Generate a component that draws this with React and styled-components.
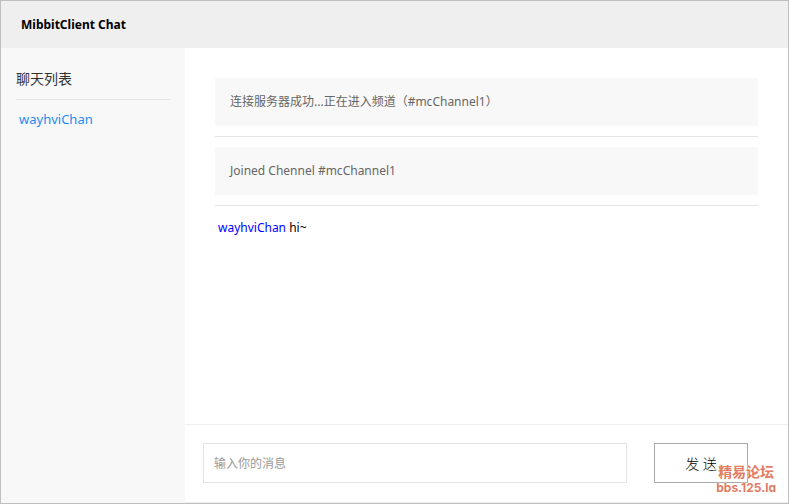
import React, {Component} from 'react';
import styled, {createGlobalStyle, css} from 'styled-components';

const channelUsers = ['wayhviChan'];

const messages = [
    {type: 'system', text: '连接服务器成功...正在进入频道（#mcChannel1）'},
    {type: 'system', text: 'Joined Chennel #mcChannel1'},
    {type: 'user', author: 'wayhviChan', text: 'hi~'}
];

export default class App extends Component {
    state = {
        messages,
        draft: ''
    };

    onDraftChange = ({target}) => this.setState({draft: target.value});

    sendMessage = (event) => {
        event.preventDefault();
        const {messages, draft} = this.state;
        if (!draft.trim()) {
            return;
        }
        this.setState({
            messages: [...messages, {type: 'user', author: 'wayhviChan', text: draft}],
            draft: ''
        });
    }

    renderUsers = () => channelUsers.map((user) => (
        <li key={user}>
            <UserLink href={`#${user}`}>{user}</UserLink>
        </li>
    ));

    renderMessages = () => this.state.messages.map(({type, author, text}, index) => (
        type === 'system'
            ? (
                <SystemMessage key={index}>
                    <SystemText>{text}</SystemText>
                </SystemMessage>
            )
            : <UserMessage key={index}><Author>{author}</Author> {text}</UserMessage>
    ));

    render() {
        return (
            <Window>
                <GlobalStyle/>
                <Header>
                    <Title>MibbitClient Chat</Title>
                </Header>
                <Body>
                    <Sidebar>
                        <SidebarTitle>聊天列表</SidebarTitle>
                        <UserList>{this.renderUsers()}</UserList>
                    </Sidebar>
                    <Chat>
                        <MessageList>{this.renderMessages()}</MessageList>
                        <Composer onSubmit={this.sendMessage}>
                            <MessageInput type="text"
                                          aria-label="输入你的消息"
                                          placeholder="输入你的消息"
                                          value={this.state.draft}
                                          onChange={this.onDraftChange}/>
                            <SendButton type="submit">发 送</SendButton>
                        </Composer>
                    </Chat>
                </Body>
                <Watermark>
                    <WatermarkName>精易论坛</WatermarkName>
                    <WatermarkSite>bbs.125.la</WatermarkSite>
                </Watermark>
            </Window>
        );
    }
}

/**
 * STYLED COMPONENT BLOCK
 */
const GlobalStyle = createGlobalStyle`
    * {
        box-sizing: border-box;
    }

    body {
        margin: 0;
        background: #fff;
        font-family: "Noto Sans", "Noto Sans CJK SC", sans-serif;
        font-size: 12px;
        line-height: 18px;
        color: #000;
    }
`;

const hairline = css`1px solid #e4e4e4`;

const Window = styled.div`
    position: relative;
    display: flex;
    flex-direction: column;
    min-height: 100vh;
    border: 1px solid #bfbfbf;
`;

const Header = styled.header`
    padding: 15px 20px 14px;
    background: #efefef;
`;

const Title = styled.h1`
    margin: 0;
    font-size: 12px;
    line-height: 18px;
    font-weight: 700;
`;

const Body = styled.div`
    display: flex;
    flex: 1;
`;

const Sidebar = styled.aside`
    flex: none;
    width: 184px;
    padding: 15px;
    background: #f8f8f8;
`;

const SidebarTitle = styled.h2`
    margin: 0;
    padding: 4px 0 8px;
    border-bottom: ${hairline};
    font-size: 14px;
    line-height: 24px;
    font-weight: 400;
    color: #333;
`;

const UserList = styled.ul`
    margin: 0;
    padding: 7px 3px;
    list-style: none;
`;

const UserLink = styled.a`
    font-size: 13px;
    line-height: 24px;
    color: #1e8cf0;
    text-decoration: none;
`;

const Chat = styled.main`
    display: flex;
    flex: 1;
    flex-direction: column;
    min-width: 0;
`;

const MessageList = styled.div`
    flex: 1;
    padding: 30px;
`;

const SystemMessage = styled.div`
    margin-bottom: 10px;
    padding-bottom: 10px;
    border-bottom: ${hairline};
`;

const SystemText = styled.p`
    margin: 0;
    padding: 15px;
    background: #f8f8f8;
    color: #666;
`;

const UserMessage = styled.p`
    margin: 0;
    padding: 3px;
`;

const Author = styled.span`
    color: #00f;
`;

const Composer = styled.form`
    display: flex;
    gap: 27px;
    padding: 18px 40px 19px 18px;
    border-top: 1px solid #eee;
    border-bottom: 1px solid #eee;
`;

const MessageInput = styled.input`
    flex: 1;
    min-width: 0;
    height: 40px;
    padding: 0 10px;
    border: ${hairline};
    border-radius: 0;
    background: #fff;
    font: inherit;
    outline: none;

    &::placeholder {
        color: #999;
        opacity: 1;
    }
`;

const SendButton = styled.button`
    width: 94px;
    height: 40px;
    padding: 0;
    border: 1px solid #aaa;
    background: #fff;
    font-family: inherit;
    font-size: 14px;
    font-weight: 300;
    color: #000;
    cursor: pointer;
`;

const Watermark = styled.div`
    position: absolute;
    right: 12px;
    bottom: 8px;
    display: flex;
    flex-direction: column;
    align-items: center;
    font-weight: 700;
    color: #e27c64;
    text-shadow: 0 0 1px #fff, 0 0 2px #fff;
    pointer-events: none;
`;

const WatermarkName = styled.span`
    font-size: 14px;
    line-height: 18px;
`;

/* cv11 is Inter's single-storey "a" */
const WatermarkSite = styled.span`
    font-family: Inter, sans-serif;
    font-feature-settings: "cv11";
    font-size: 12px;
    line-height: 14px;
`;
